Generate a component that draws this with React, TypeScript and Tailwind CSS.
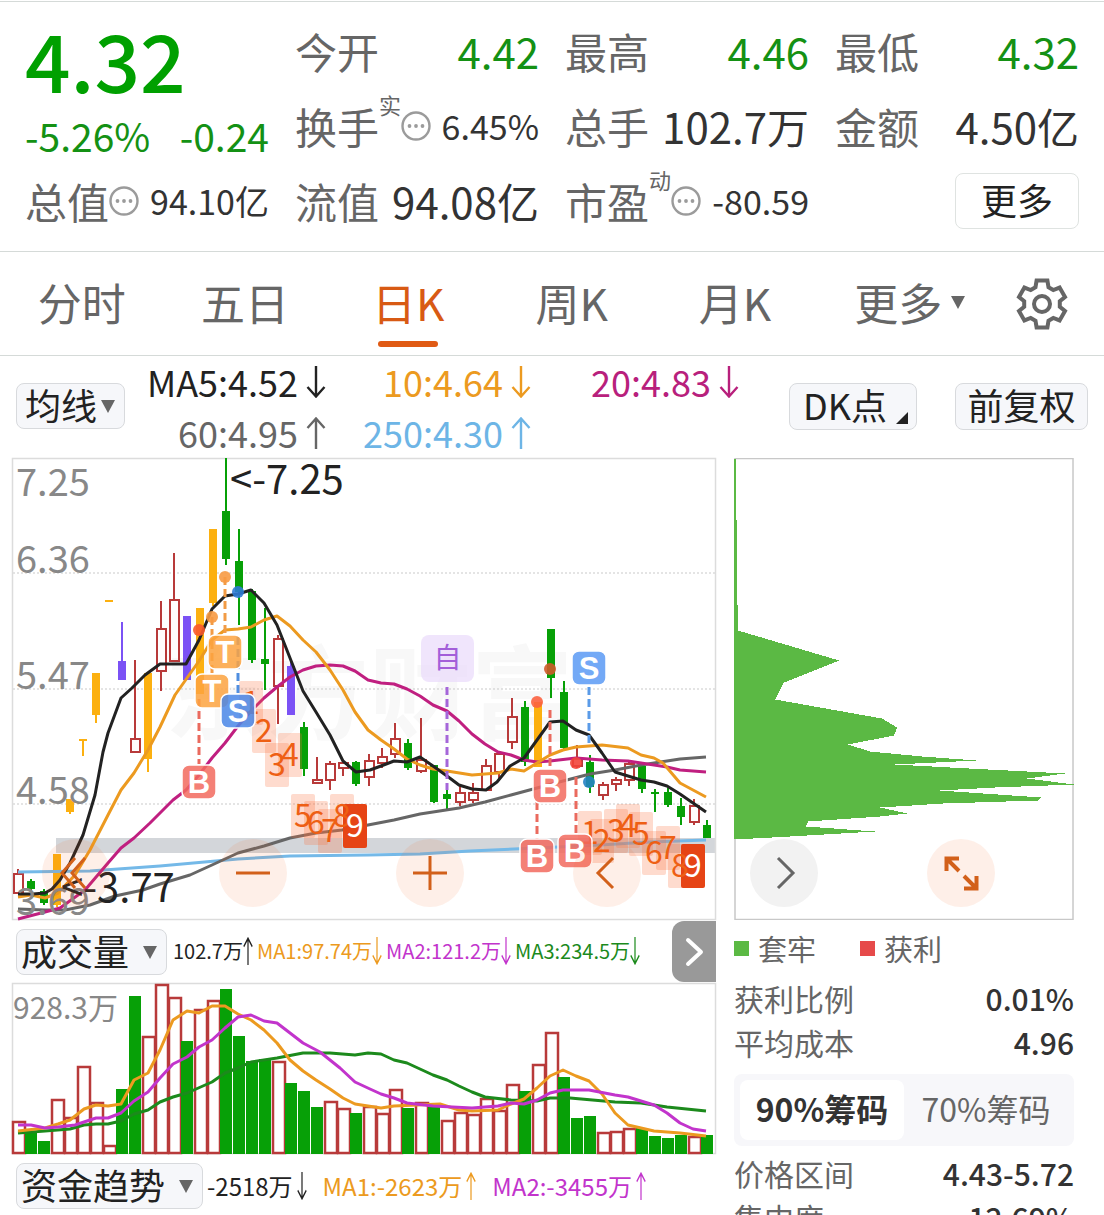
import { useState } from 'react';
import type { ReactNode } from 'react';
import clsx from 'clsx';

type Point = [number, number];
// kind, high, open/close top, open/close bottom, low
type Candle = [string, number, number, number, number];

const RED = '#b83a3a';
const GREEN = '#07a007';
const YELLOW = '#fcb010';
const PURPLE = '#7b52f5';

const STEP = 13;
const FIRST_X = 18;
const xAt = (i: number) => FIRST_X + STEP * i;

const candles: Candle[] = [
  ['r', 869, 874, 893, 893], ['g', 879, 881, 889, 890], ['g', 889, 891, 903, 905], ['y', 854, 854, 905, 907],
  ['y', 799, 799, 812, 814], ['t', 739, 739, 741, 756], ['y', 673, 673, 715, 723], ['t', 600, 600, 602, 602],
  ['p', 622, 661, 680, 680], ['r', 660, 739, 752, 752], ['y', 673, 673, 759, 772], ['r', 601, 629, 671, 691],
  ['r', 553, 600, 661, 661], ['p', 616, 616, 680, 680], ['y', 608, 608, 694, 694], ['y', 529, 529, 603, 606],
  ['g', 458, 511, 559, 565], ['g', 529, 561, 592, 625], ['g', 589, 591, 660, 663], ['g', 608, 659, 664, 690],
  ['r', 635, 639, 686, 724], ['p', 662, 666, 715, 715], ['g', 722, 727, 769, 776], ['r', 757, 780, 783, 783],
  ['r', 761, 764, 780, 790], ['r', 760, 763, 768, 776], ['g', 761, 762, 784, 786], ['r', 754, 761, 777, 786],
  ['r', 748, 757, 763, 768], ['r', 723, 739, 754, 758], ['g', 739, 743, 768, 770], ['r', 718, 760, 771, 773],
  ['g', 765, 765, 802, 803], ['g', 790, 794, 799, 809], ['r', 784, 793, 802, 806], ['r', 783, 793, 800, 803],
  ['r', 759, 766, 790, 790], ['r', 752, 754, 772, 780], ['r', 698, 717, 742, 749], ['g', 701, 707, 762, 766],
  ['y', 702, 702, 767, 767], ['g', 629, 629, 678, 698], ['g', 681, 692, 748, 750], ['r', 745, 758, 766, 768],
  ['g', 755, 762, 787, 793], ['r', 782, 785, 795, 800], ['r', 777, 780, 784, 791], ['r', 762, 764, 780, 786],
  ['g', 766, 766, 789, 793], ['g', 789, 792, 794, 812], ['g', 788, 792, 805, 807], ['g', 798, 806, 817, 825],
  ['r', 799, 806, 822, 825], ['g', 820, 825, 838, 838],
];

const ma5: Point[] = [[18, 894], [33, 894], [45, 893], [52, 889], [60, 880], [70, 863], [83, 835], [95, 795], [103, 752], [108, 733], [121, 698], [132, 688], [145, 675], [160, 664], [186, 664], [199, 640], [212, 609], [225, 596], [238, 594], [251, 590], [264, 603], [277, 625], [290, 658], [303, 691], [316, 712], [330, 735], [343, 761], [356, 772], [370, 770], [381, 766], [394, 761], [407, 762], [420, 757], [433, 766], [447, 776], [459, 785], [472, 789], [486, 790], [497, 782], [510, 766], [524, 758], [537, 740], [550, 722], [563, 721], [576, 730], [589, 735], [602, 753], [615, 772], [628, 776], [641, 780], [654, 782], [667, 786], [680, 794], [693, 803], [706, 812]];
const ma10: Point[] = [[18, 897], [31, 895], [45, 898], [58, 893], [75, 875], [90, 850], [108, 815], [121, 790], [134, 773], [148, 750], [160, 727], [175, 695], [199, 661], [212, 640], [225, 630], [238, 629], [251, 627], [264, 620], [277, 616], [290, 626], [303, 640], [316, 652], [330, 670], [343, 690], [355, 712], [368, 730], [381, 740], [394, 749], [407, 759], [420, 765], [433, 769], [447, 771], [472, 775], [485, 774], [498, 773], [511, 769], [524, 771], [537, 763], [550, 755], [563, 750], [576, 747], [602, 745], [628, 748], [641, 755], [654, 758], [663, 763], [680, 783], [693, 790], [706, 797]];
const ma20: Point[] = [[18, 919], [45, 912], [60, 908], [85, 890], [108, 863], [121, 848], [134, 838], [150, 823], [173, 800], [186, 790], [199, 775], [212, 758], [225, 743], [238, 726], [251, 711], [264, 698], [277, 687], [290, 677], [303, 670], [316, 666], [330, 665], [343, 666], [355, 671], [368, 680], [381, 683], [394, 684], [407, 689], [420, 696], [433, 705], [447, 711], [459, 721], [472, 734], [485, 744], [498, 752], [511, 755], [524, 760], [537, 762], [550, 761], [576, 758], [602, 760], [628, 761], [641, 763], [667, 767], [680, 770], [706, 772]];
const ma60: Point[] = [[18, 909], [45, 910], [65, 910], [90, 905], [115, 896], [143, 890], [160, 884], [190, 875], [212, 865], [238, 853], [264, 846], [290, 838], [316, 833], [342, 830], [368, 825], [394, 820], [420, 814], [459, 808], [485, 802], [511, 795], [537, 788], [563, 781], [590, 774], [615, 770], [641, 765], [680, 759], [706, 757]];
const ma250: Point[] = [[18, 872], [90, 871], [160, 866], [238, 859], [290, 856], [368, 855], [420, 854], [470, 851], [537, 848], [600, 845], [650, 842], [706, 840]];

const counts: [string, number, number][] = [
  ['1', 251, 714], ['2', 264, 742], ['3', 277, 776], ['4', 290, 766], ['5', 303, 827], ['6', 316, 834], ['7', 330, 842], ['8', 342, 827], ['9', 355, 837],
  ['1', 590, 844], ['2', 602, 852], ['3', 616, 842], ['4', 628, 837], ['5', 641, 845], ['6', 654, 864], ['7', 668, 859], ['8', 680, 877], ['9', 693, 877],
];

// x, from, to, colour
const leaders: [number, number, number, string][] = [
  [199, 699, 764, '#ea6a5e'], [225, 577, 636, '#f29b45'], [212, 617, 674, '#f29b45'], [238, 637, 695, '#4f8ee0'],
  [550, 710, 769, '#ea6a5e'], [537, 802, 839, '#ea6a5e'], [576, 777, 834, '#ea6a5e'], [447, 687, 790, '#a566d9'], [589, 687, 743, '#5b9be8'],
];

const dots: [number, number, string][] = [
  [199, 630, '#fb5a2c'], [212, 617, '#f79a42'], [225, 577, '#f79a42'], [238, 592, '#2e7bd6'],
  [537, 702, '#fb6240'], [550, 669, '#cf5a2a'], [576, 763, '#f2443a'], [589, 782, '#2583c4'],
];

const badges: [string, number, number, string][] = [
  ['T', 225, 652, '#fda340'], ['T', 212, 691, '#fda340'], ['B', 199, 782, '#f26a5e'], ['S', 238, 711, '#4a87e8'],
  ['B', 550, 786, '#f26a5e'], ['B', 537, 856, '#f26a5e'], ['B', 575, 851, '#f26a5e'], ['S', 589, 668, '#5a9af5'],
];

const volumes: [string, number][] = [
  ['r', 1121], ['g', 1132], ['g', 1141], ['r', 1099], ['r', 1117], ['r', 1066], ['r', 1102], ['r', 1145], ['g', 1089], ['g', 996],
  ['r', 1036], ['r', 984], ['r', 997], ['g', 1041], ['r', 1009], ['r', 1000], ['g', 989], ['g', 1036], ['g', 1061], ['g', 1059],
  ['r', 1061], ['g', 1083], ['g', 1091], ['g', 1107], ['r', 1101], ['r', 1108], ['g', 1113], ['r', 1106], ['r', 1113], ['r', 1089],
  ['g', 1108], ['r', 1102], ['g', 1107], ['r', 1120], ['r', 1112], ['r', 1114], ['r', 1098], ['r', 1110], ['r', 1084], ['g', 1091],
  ['r', 1064], ['r', 1032], ['g', 1077], ['g', 1118], ['g', 1116], ['r', 1132], ['r', 1131], ['r', 1128], ['g', 1128], ['g', 1136],
  ['g', 1138], ['g', 1135], ['r', 1136], ['g', 1135],
];

const vol1: Point[] = [[18, 1131], [45, 1128], [58, 1124], [70, 1120], [84, 1109], [96, 1105], [108, 1106], [121, 1104], [134, 1080], [148, 1073], [160, 1050], [173, 1020], [187, 1011], [199, 1013], [212, 1006], [225, 1006], [238, 1014], [251, 1020], [264, 1030], [277, 1043], [290, 1060], [303, 1071], [316, 1080], [330, 1089], [343, 1098], [355, 1104], [368, 1106], [381, 1108], [394, 1106], [440, 1104], [459, 1110], [472, 1111], [498, 1110], [511, 1104], [524, 1099], [537, 1088], [550, 1076], [563, 1070], [576, 1076], [589, 1081], [602, 1094], [615, 1113], [628, 1125], [641, 1128], [654, 1131], [680, 1133], [706, 1136]];
const vol2: Point[] = [[18, 1125], [31, 1125], [45, 1128], [58, 1127], [75, 1125], [96, 1118], [108, 1118], [121, 1113], [134, 1101], [148, 1092], [160, 1078], [173, 1064], [187, 1057], [199, 1047], [212, 1040], [225, 1028], [238, 1017], [251, 1015], [264, 1021], [277, 1023], [290, 1033], [303, 1043], [320, 1052], [340, 1068], [355, 1082], [370, 1089], [381, 1094], [394, 1098], [407, 1103], [433, 1106], [472, 1108], [498, 1106], [511, 1103], [524, 1104], [537, 1100], [550, 1093], [563, 1090], [589, 1090], [615, 1095], [628, 1097], [654, 1105], [667, 1113], [680, 1123], [693, 1129], [706, 1131]];
const vol3: Point[] = [[18, 1133], [45, 1131], [70, 1129], [84, 1125], [96, 1124], [108, 1124], [121, 1121], [134, 1114], [148, 1110], [160, 1102], [173, 1097], [187, 1093], [212, 1082], [225, 1073], [238, 1068], [251, 1062], [277, 1058], [303, 1053], [330, 1053], [355, 1055], [368, 1053], [381, 1054], [394, 1060], [407, 1063], [420, 1069], [433, 1075], [447, 1080], [459, 1086], [472, 1092], [485, 1097], [511, 1100], [537, 1101], [550, 1098], [570, 1098], [615, 1102], [641, 1103], [667, 1107], [706, 1111]];

// outline of the chip distribution, top to bottom
const chips: Point[] = [[736, 459], [737, 580], [738, 630], [839, 660], [784, 682], [775, 699], [882, 718], [897, 727], [894, 735], [848, 744], [870, 751], [922, 756], [976, 760], [895, 764], [950, 767], [1065, 773], [1027, 778], [1074, 784], [995, 787], [940, 790], [1041, 797], [1038, 800], [943, 803], [880, 807], [907, 813], [880, 816], [808, 821], [806, 826], [875, 831], [790, 836], [735, 839]];

const toPoints = (points: Point[]) => points.map((p) => p.join(',')).join(' ');

// One row per price level, so the edge is stepped
const chipPath = () => {
  let d = 'M734 459';
  for (let y = 460; y < 839; y++) {
    const i = chips.findIndex((p) => p[1] >= y);
    const [x0, y0] = chips[i - 1];
    const [x1, y1] = chips[i];
    const x = Math.round(x0 + ((x1 - x0) * (y - y0)) / (y1 - y0));
    d += `H${x}V${y + 1}`;
  }
  return d + 'H734Z';
};

const gearPoints = () => {
  const result: string[] = [];
  for (let k = 0; k < 6; k++) {
    const spots: Point[] = [[-21, 18], [-13, 24], [13, 24], [21, 18]];
    spots.forEach(([offset, r]) => {
      const a = ((k * 60 - 90 + offset) * Math.PI) / 180;
      result.push(`${(26 + r * Math.cos(a)).toFixed(1)},${(26 + r * Math.sin(a)).toFixed(1)}`);
    });
  }
  return result.join(' ');
};

function InfoIcon() {
  return (
    <svg viewBox="0 0 30 30" className="size-[30px] shrink-0" aria-hidden="true">
      <circle cx="15" cy="15" r="13.5" fill="none" stroke="#9b9b9b" strokeWidth="2.4" />
      <circle cx="8.5" cy="15" r="1.9" fill="#9b9b9b" />
      <circle cx="15" cy="15" r="1.9" fill="#9b9b9b" />
      <circle cx="21.5" cy="15" r="1.9" fill="#9b9b9b" />
    </svg>
  );
}

function Triangle({ className }: { className?: string }) {
  return (
    <svg viewBox="0 0 16 13" className={clsx('h-[13px] w-4 shrink-0', className)} aria-hidden="true">
      <path d="M1 0h14L8 13z" fill="#666" />
    </svg>
  );
}

function Arrow({ up, small }: { up?: boolean; small?: boolean }) {
  return (
    <svg
      viewBox="0 0 20 32"
      className={clsx('shrink-0', small ? 'h-7 w-[10px]' : 'h-8 w-5', up && 'rotate-180')}
      preserveAspectRatio="none"
      fill="none"
      stroke="currentColor"
      strokeWidth="2.4"
      aria-hidden="true"
    >
      <path d="M10 0v30M1.500 21l8.500 9.500 8.500-9.500" />
    </svg>
  );
}

interface StatProps {
  label: string;
  value: string;
  sup?: string;
  info?: boolean;
  green?: boolean;
}

function Stat({ label, value, sup, info, green }: StatProps) {
  return (
    <div className="flex h-[75px] items-center whitespace-nowrap">
      <span className="text-[42px] text-[#666]">{label}</span>
      {sup && <span className="self-start text-[22px] text-[#666]">{sup}</span>}
      {info && <InfoIcon />}
      <span className={clsx('ml-auto', info ? 'text-[34px]' : 'text-[42px]', green ? 'text-[#149114]' : 'text-[#333]')}>
        {value}
      </span>
    </div>
  );
}

function Picker({ name, className, arrow, options }: { name: string; className: string; arrow: string; options: string[] }) {
  return (
    <div className={clsx('relative flex h-[46px] shrink-0 items-center overflow-hidden rounded-lg border border-[#d8dadd] bg-[#f6f7fa] pb-1', className)}>
      <select aria-label={name} className="h-[54px] w-full shrink-0 appearance-none bg-transparent text-[36px] text-[#222] outline-none">
        {options.map((option) => (
          <option key={option}>{option}</option>
        ))}
      </select>
      <Triangle className={clsx('pointer-events-none absolute top-4', arrow)} />
    </div>
  );
}

function RoundButton({ label, grey, children }: { label: string; grey?: boolean; children: ReactNode }) {
  return (
    <button
      type="button"
      aria-label={label}
      className={clsx('flex size-[68px] shrink-0 items-center justify-center rounded-full', grey ? 'bg-[#f2f2f2]' : 'bg-[#f5641e]/10')}
    >
      <svg viewBox="0 0 36 36" className="size-9" fill="none" stroke={grey ? '#666' : '#d2601a'} strokeWidth="3">
        {children}
      </svg>
    </button>
  );
}

function CandleShape({ candle, i }: { candle: Candle; i: number }) {
  const [kind, high, top, bottom, low] = candle;
  const x = xAt(i);
  if (kind === 'r') {
    return (
      <g stroke={RED} fill="none" strokeWidth="2">
        <path d={`M${x} ${high}V${top}M${x} ${bottom}V${low}`} />
        <rect x={x - 4} y={top} width="9" height={bottom - top} />
      </g>
    );
  }
  const color = kind === 'g' ? GREEN : kind === 'p' ? PURPLE : YELLOW;
  return (
    <g fill={color}>
      <rect x={x - 1} y={high} width="2" height={low - high} />
      <rect x={x - 4} y={top} width="8" height={bottom - top} />
    </g>
  );
}

function PriceChart() {
  return (
    <svg viewBox="12 458 704 462" className="block h-auto w-full overflow-visible" role="img" aria-label="日K">
      <text x="165" y="732" fontSize="102" fontWeight="bold" fill="#f8f8f8">东方财富</text>
      <path d="M13 573H716M13 689H716M13 804H716" stroke="#c9c9c9" strokeDasharray="2 2" />
      <rect x="56" y="838" width="660" height="15" fill="#d3d6da" />
      <rect x="12.500" y="458.500" width="703" height="461" fill="none" stroke="#dcdcdc" strokeWidth="1.500" />

      {candles.map((candle, i) => (
        <CandleShape key={i} candle={candle} i={i} />
      ))}

      <g fill="none" strokeWidth="3" strokeLinejoin="round">
        <polyline points={toPoints(ma250)} stroke="#74b9e8" />
        <polyline points={toPoints(ma60)} stroke="#666" />
        <polyline points={toPoints(ma20)} stroke="#c01f80" />
        <polyline points={toPoints(ma10)} stroke="#ec9a20" />
        <polyline points={toPoints(ma5)} stroke="#222" />
      </g>

      <g fill="#888" fontSize="38">
        <text x="16" y="496">7.25</text>
        <text x="16" y="573">6.36</text>
        <text x="16" y="689">5.47</text>
        <text x="16" y="804">4.58</text>
        <text x="16" y="915">3.69</text>
      </g>

      {counts.map(([n, x, y], i) => (
        <rect
          key={i}
          x={x - 12}
          y={y - 33}
          width="24"
          height="44"
          rx="2"
          fill={n === '9' ? '#e64415' : '#fa6e3c'}
          fillOpacity={n === '9' ? 1 : 0.25}
        />
      ))}
      {counts.map(([n, x, y], i) => (
        <text key={i} x={x} y={y} fontSize="32" textAnchor="middle" fill={n === '9' ? '#fff' : '#ee5f14'}>{n}</text>
      ))}

      {leaders.map(([x, from, to, color]) => (
        <path key={`${x}-${from}`} d={`M${x} ${from}V${to}`} stroke={color} strokeWidth="3" strokeDasharray="8 4" />
      ))}

      {badges.map(([letter, x, y, color]) => (
        <g key={`${x}-${y}`}>
          <rect x={x - 17} y={y - 17} width="34" height="34" rx="7" fill={color} stroke="#fff" strokeWidth="1.500" fillOpacity="0.85" />
          <text x={x} y={y + 11} fontSize="31" fontWeight="bold" textAnchor="middle" fill="#fff" className="font-['Liberation_Sans',sans-serif]">
            {letter}
          </text>
        </g>
      ))}
      <rect x="421" y="635" width="53" height="47" rx="8" fill="#e9dafb" fillOpacity="0.7" />
      <text x="447.500" y="668" fontSize="28" textAnchor="middle" fill="#a35fd9">自</text>

      {dots.map(([x, y, color]) => (
        <circle key={`${x}-${y}`} cx={x} cy={y} r="6" fill={color} fillOpacity="0.9" />
      ))}

      <g fill="#222" fontSize="40">
        <text x="230" y="494">&lt;-7.25</text>
        <text x="61" y="902">&lt;-3.77</text>
      </g>
    </svg>
  );
}

function VolumeChart() {
  return (
    <svg viewBox="12 983 704 171" className="block h-auto w-full overflow-visible" role="img" aria-label="成交量">
      <rect x="12.500" y="983.500" width="703" height="170" fill="none" stroke="#dcdcdc" strokeWidth="1.500" />
      {volumes.map(([kind, top], i) =>
        kind === 'r' ? (
          <rect key={i} x={xAt(i) - 5} y={top + 1} width="12" height={1152 - top} fill="#fff" stroke={RED} strokeWidth="2.500" />
        ) : (
          <rect key={i} x={xAt(i) - 6} y={top} width="12" height={1154 - top} fill={GREEN} />
        )
      )}
      <text x="13" y="1019" fontSize="30" fill="#888">928.3万</text>
      <g fill="none" strokeWidth="3" strokeLinejoin="round">
        <polyline points={toPoints(vol3)} stroke="#1c8a1c" />
        <polyline points={toPoints(vol1)} stroke="#ec9a20" />
        <polyline points={toPoints(vol2)} stroke="#c234cc" />
      </g>
    </svg>
  );
}

const tabs = ['分时', '五日', '日K', '周K', '月K', '更多'];

export default function App() {
  const [tab, setTab] = useState('日K');
  const [range, setRange] = useState('90%筹码');

  return (
    <div className="h-screen overflow-hidden bg-white pt-px font-['Noto_Sans_CJK_SC',sans-serif] text-[#333]">
      <header className="grid grid-cols-4 gap-x-[26px] border-y border-[#d5dad8] px-[25px] pt-[11px] pb-[13px]">
        <div className="row-span-2 text-[#149114]">
          <div className="text-[80px] leading-[90px] font-medium text-[#00a000]">4.32</div>
          <div className="flex justify-between pt-1 text-[39px] leading-[56px] whitespace-nowrap">
            <span>-5.26%</span>
            <span>-0.24</span>
          </div>
        </div>
        <Stat label="今开" value="4.42" green />
        <Stat label="最高" value="4.46" green />
        <Stat label="最低" value="4.32" green />
        <Stat label="换手" sup="实" info value="6.45%" />
        <Stat label="总手" value="102.7万" />
        <Stat label="金额" value="4.50亿" />
        <Stat label="总值" info value="94.10亿" />
        <Stat label="流值" value="94.08亿" />
        <Stat label="市盈" sup="动" info value="-80.59" />
        <button type="button" className="h-14 w-[124px] self-center justify-self-end rounded-lg border border-[#dfe3e1] pb-1 text-[36px] leading-[50px] text-[#222]">
          更多
        </button>
      </header>

      <nav className="flex border-b border-[#d5dad8]">
        {tabs.map((name) => (
          <button
            key={name}
            type="button"
            onClick={() => setTab(name)}
            className={clsx('flex flex-1 flex-col items-center pt-[18px] pb-2 text-[44px] leading-[64px]', tab === name ? 'text-[#d85a14]' : 'text-[#666]')}
          >
            <span className={clsx('flex items-center gap-2', name === '更多' && 'pl-6')}>
              {name}
              {name === '更多' && <Triangle />}
            </span>
            <span className={clsx('mt-[7px] h-[6px] w-[60px] rounded-full', tab === name && 'bg-[#e05a14]')} />
          </button>
        ))}
        <button type="button" aria-label="设置" className="flex w-[124px] items-center justify-center">
          <svg viewBox="0 0 52 52" className="size-[52px]" fill="none" stroke="#666" strokeWidth="4">
            <polygon points={gearPoints()} />
            <circle cx="26" cy="26" r="8" />
          </svg>
        </button>
      </nav>

      <section className="flex h-[102px] px-4 text-[36px] whitespace-nowrap">
        <div className="pt-[27px]">
          <Picker name="主图指标" className="w-[109px] pl-[8px]" arrow="right-[8px]" options={['均线', 'BOLL']} />
        </div>
        <div className="grid grid-cols-[201px_205px_208px] leading-[49px]">
          <span className="flex items-center justify-end gap-2 text-[#222]">MA5:4.52<Arrow /></span>
          <span className="flex items-center justify-end gap-2 text-[#ec9a20]">10:4.64<Arrow /></span>
          <span className="flex items-center justify-end gap-2 text-[#b8207c]">20:4.83<Arrow /></span>
          <span className="flex items-center justify-end gap-2 text-[#666]">60:4.95<Arrow up /></span>
          <span className="flex items-center justify-end gap-2 text-[#6db5e6]">250:4.30<Arrow up /></span>
        </div>
        <div className="ml-auto flex items-start gap-[38px] pt-[27px] leading-[40px] text-[#222]">
          <button type="button" className="flex h-[47px] w-[128px] items-start rounded-lg border border-[#d8dadd] bg-[#f6f7fa] pl-[13px]">
            DK点
            <svg viewBox="0 0 12 12" className="mt-[28px] ml-[9px] size-3" aria-hidden="true">
              <path d="M12 0v12H0z" fill="#222" />
            </svg>
          </button>
          <button type="button" className="flex h-[47px] w-[133px] items-start justify-center rounded-lg border border-[#d8dadd] bg-[#f6f7fa]">
            前复权
          </button>
        </div>
      </section>

      <main className="flex gap-[18px] pr-[30px] pl-3">
        <div className="min-w-0 flex-1">
          <div className="relative">
            <PriceChart />
            <div className="absolute inset-x-0 bottom-[13px] flex gap-[109px] pl-[30px]">
              <RoundButton label="最左">
                <path d="M17 3 4 18l13 15M27 3 14 18l13 15" />
              </RoundButton>
              <RoundButton label="缩小">
                <path d="M1 18h34" />
              </RoundButton>
              <RoundButton label="放大">
                <path d="M1 18h34M18 1v34" />
              </RoundButton>
              <RoundButton label="左移">
                <path d="M24 3 9 18l15 15" />
              </RoundButton>
            </div>
          </div>

          <div className="flex h-[63px] items-start pl-1 text-[20px] whitespace-nowrap">
            <div className="pt-[9px]">
              <Picker name="副图一" className="w-[151px] pl-[4px]" arrow="right-2" options={['成交量', 'MACD']} />
            </div>
            <div className="flex h-[61px] items-center gap-1 pl-[6px]">
              <span className="flex items-center text-[#222]">102.7万<Arrow up small /></span>
              <span className="flex items-center text-[#ec9a20]">MA1:97.74万<Arrow small /></span>
              <span className="flex items-center text-[#c234cc]">MA2:121.2万<Arrow small /></span>
              <span className="flex items-center text-[#1c8a1c]">MA3:234.5万<Arrow small /></span>
            </div>
            <button type="button" aria-label="展开" className="mt-px ml-auto flex h-[61px] w-11 shrink-0 items-center justify-center rounded-l-xl bg-[#999]">
              <svg viewBox="0 0 20 30" className="h-[30px] w-5" fill="none" stroke="#fff" strokeWidth="4" strokeLinecap="round" strokeLinejoin="round">
                <path d="M4 3l13 12L4 27" />
              </svg>
            </button>
          </div>

          <VolumeChart />

          <div className="flex items-start pt-[9px] pl-1 text-[24px] whitespace-nowrap">
            <Picker name="副图二" className="w-[187px] pl-[4px]" arrow="right-2" options={['资金趋势', 'KDJ']} />
            <div className="flex h-[46px] items-center gap-4 pl-1">
              <span className="flex items-center gap-1 text-[#222]">-2518万<Arrow small /></span>
              <span className="flex items-center gap-1 text-[#ec9a20]">MA1:-2623万<Arrow up small /></span>
              <span className="flex items-center gap-1 text-[#c234cc]">MA2:-3455万<Arrow up small /></span>
            </div>
          </div>
        </div>

        <aside className="w-[340px] shrink-0 text-[30px] leading-[44px] whitespace-nowrap text-[#666]">
          <div className="relative">
            <svg viewBox="734 458 340 462" className="block h-auto w-full" role="img" aria-label="筹码分布">
              <rect x="735" y="458.500" width="338" height="461" fill="none" stroke="#c8c8c8" strokeWidth="1.500" />
              <path d={chipPath()} fill="#5bb944" shapeRendering="crispEdges" />
            </svg>
            <div className="absolute inset-x-0 bottom-[13px] flex gap-[109px] pl-4">
              <RoundButton label="右移" grey>
                <path d="M12 3l15 15-15 15" />
              </RoundButton>
              <RoundButton label="全屏">
                <g strokeWidth="4">
                  <path d="M3.500 16V3.500H16M4 4l12 12M33.500 21v12.500H21M33 33 21 21" />
                </g>
              </RoundButton>
            </div>
          </div>

          <div className="flex h-14 items-center gap-11 text-[29px]">
            <span className="flex items-center gap-[9px]"><i className="size-[15px] bg-[#5bb944]" />套牢</span>
            <span className="flex items-center gap-[9px]"><i className="size-[15px] bg-[#e64a4a]" />获利</span>
          </div>
          <dl>
            <div className="flex justify-between"><dt>获利比例</dt><dd className="font-medium text-[#333]">0.01%</dd></div>
            <div className="flex justify-between"><dt>平均成本</dt><dd className="font-medium text-[#333]">4.96</dd></div>
          </dl>
          <div className="mt-[10px] mb-[5px] grid h-[72px] grid-cols-2 rounded-lg bg-[#f7f7fa] p-[6px] text-[32px] leading-[56px]">
            {['90%筹码', '70%筹码'].map((name) => (
              <button
                key={name}
                type="button"
                onClick={() => setRange(name)}
                className={clsx('rounded-lg pb-1', range === name && 'bg-white font-bold text-[#333]')}
              >
                {name}
              </button>
            ))}
          </div>
          <dl>
            <div className="flex justify-between"><dt>价格区间</dt><dd className="font-medium text-[#333]">4.43-5.72</dd></div>
            <div className="flex justify-between"><dt>集中度</dt><dd className="font-medium text-[#333]">12.69%</dd></div>
          </dl>
        </aside>
      </main>
    </div>
  );
}
